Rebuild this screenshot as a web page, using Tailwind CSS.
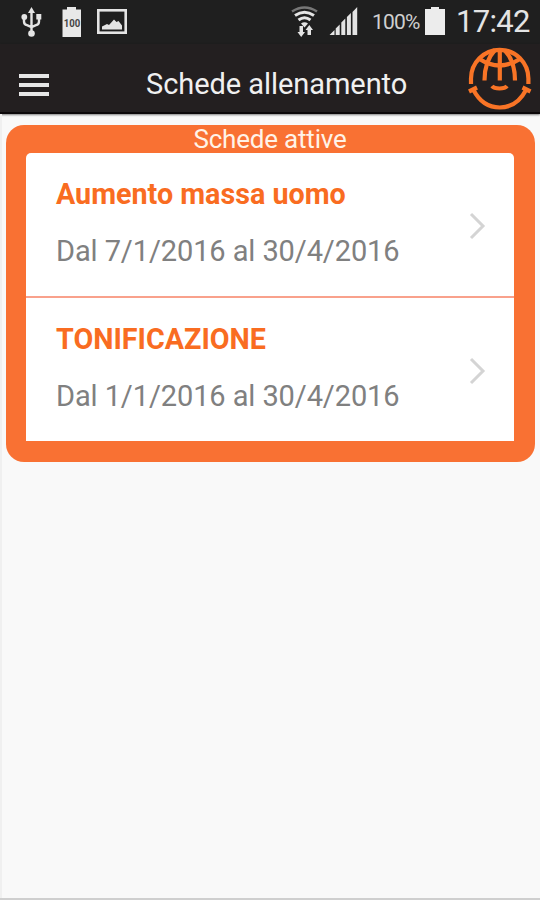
<!DOCTYPE html>
<html lang="it">
<head>
    <meta charset="UTF-8">
    <meta name="viewport" content="width=device-width, initial-scale=1.0">
    <title>Schede allenamento</title>
    <script src="https://cdn.jsdelivr.net/npm/@tailwindcss/browser@4"></script>
</head>
<body class="bg-[#f9f9f9] font-['Roboto',sans-serif]">
    <div class="flex h-[900px] w-[540px] flex-col overflow-hidden border-b-2 border-[#cfcfcf]">

        <!-- Status bar -->
        <div class="flex h-11 shrink-0 items-center bg-[#1f1f1f] text-[#e4e4e4]">
            <svg class="ml-5 h-11 w-[112px] shrink-0" viewBox="20 0 112 44" fill="none">
                <!-- USB -->
                <g stroke="#e4e4e4" stroke-width="2.400">
                    <path d="M31.500 12v20M24 18v3.500q0 3 3 3.700l4.500 2M39 18v3.500q0 3-3 3.700l-4.500 2"/>
                </g>
                <path d="M31.500 7l3.500 6h-7z" fill="#e4e4e4"/>
                <circle cx="31.500" cy="33.500" r="3.300" fill="#e4e4e4"/>
                <circle cx="24.300" cy="17" r="2.900" fill="#e4e4e4"/>
                <rect x="36.300" y="14" width="5" height="5.500" fill="#e4e4e4"/>
                <!-- Full battery -->
                <path d="M67 7h9v2.500h5V37H62.500V9.500H67z" fill="#e8e8e8"/>
                <text x="72" y="27" text-anchor="middle" textLength="16.500" lengthAdjust="spacingAndGlyphs" font-size="10" font-weight="700" fill="#444">100</text>
                <!-- Picture -->
                <rect x="98.300" y="10.300" width="27.400" height="22.400" stroke="#e4e4e4" stroke-width="2.600"/>
                <path d="M102 29.500v-3l5-2.500 2 1 5-5.500 2.500 2.500 2-1 3.500 4.500v4z" fill="#e4e4e4"/>
            </svg>
            <div class="flex-1"></div>
            <svg class="h-11 w-[72px] shrink-0" viewBox="290 0 72 44" fill="none">
                <!-- Wi-Fi with data arrows -->
                <path d="M292 11.500q12.500-8 25 0" stroke="#777" stroke-width="2.600"/>
                <path d="M295 15.500q9.500-6.500 19 0M298.500 20q6-4.500 12 0" stroke="#e4e4e4" stroke-width="3"/>
                <path d="M301 23.500q3.500-2.500 7 0l-3.500 4z" fill="#e4e4e4"/>
                <path d="M299.500 26h3.500v6h2l-3.800 5-3.700-5h2zM307.500 35h3.500v-5h2l-3.700-5-3.800 5h2z" fill="#e4e4e4"/>
                <!-- Signal -->
                <path d="M329.500 35l5-5v5zM335.700 28.500l4-4V35h-4zM341.300 22.500l4-4V35h-4zM346.900 17l4-4v22h-4zM352.500 12l4.700-5v28h-4.700z" fill="#e4e4e4"/>
            </svg>
            <span class="ml-[10px] w-[48px] whitespace-nowrap text-[21px] leading-none tracking-[-0.8px] text-[#cfcfcf]">100%</span>
            <svg class="ml-1 h-11 w-[22px] shrink-0" viewBox="424 0 22 44"><path d="M431 7h8v2h6v26h-20V9h6z" fill="#ececec"/></svg>
            <span class="ml-[10px] w-[84px] whitespace-nowrap pb-px text-[31px] leading-none tracking-[-0.7px]">17:42</span>
        </div>

        <!-- Title bar -->
        <header class="flex h-[70px] shrink-0 items-center border-b-2 border-[#0c0809] bg-[#231f20] pl-[18px] pr-[7px] shadow-[0_1px_2px_rgba(0,0,0,0.5)]">
            <div class="mt-[13px] flex w-8 flex-col gap-[5px] px-px">
                <span class="h-1 bg-[#e6e6e6]"></span>
                <span class="h-1 bg-[#e6e6e6]"></span>
                <span class="h-1 bg-[#e6e6e6]"></span>
            </div>
            <h1 class="ml-24 mt-[13px] whitespace-nowrap text-[29px] leading-none tracking-[-0.06px] text-[#f0f0f0]">Schede allenamento</h1>
            <svg class="ml-auto h-16 w-[66px]" viewBox="467 46 66 64" fill="none" stroke="#f97426" stroke-width="4.200">
                <path d="M471 84v-5.500a28.700 28.700 0 0 1 57.400 0V84"/>
                <path d="M479.500 59q20 13 40.500 0"/>
                <path d="M499.800 50v30.500M495 50q-10.500 11-10.500 30.500M504.500 50q10.500 11 10.500 30.500"/>
                <path d="M492 86q2 2.500 7.500 2.500t7.500-2.500"/>
                <path d="M473.500 90c6 11.500 15.500 17.500 26.200 17.500S520 101.500 526 90M469 91.500l8-4M530.500 91.500l-8-4"/>
            </svg>
        </header>

        <!-- Active plans -->
        <main class="flex-1 border-l-2 border-[#f0f0f0] pl-1 pr-[5px] pt-[11px]">
            <section class="h-[337px] rounded-[18px] bg-[#f97133] pb-5 pl-5 pr-[21px]">
                <h2 class="h-7 text-center text-[26px] leading-[29px] tracking-[-0.2px] text-[#fff3e8]">Schede attive</h2>
                <ul class="rounded-t-[5px] bg-white">
                    <li class="flex h-[145px] items-center justify-between border-b-2 border-[#f9a18c] pl-[30px] pr-7">
                        <div class="-mt-1 whitespace-nowrap">
                            <h3 class="text-[28.7px] font-bold leading-8 text-[#f96c21]">Aumento massa uomo</h3>
                            <p class="mt-[25px] text-[29px] leading-8 tracking-[-0.1px] text-[#808080]">Dal 7/1/2016 al 30/4/2016</p>
                        </div>
                        <svg class="mt-0.5 h-7 w-[17px]" viewBox="0 0 17 28" fill="none" stroke="#d4d4d4" stroke-width="3"><path d="M2 2l12 12L2 26"/></svg>
                    </li>
                    <li class="flex h-[143px] items-center justify-between pl-[30px] pr-7">
                        <div class="-mt-[5px] whitespace-nowrap">
                            <h3 class="text-[28.7px] font-bold leading-8 text-[#f96c21]">TONIFICAZIONE</h3>
                            <p class="mt-[25px] text-[29px] leading-8 tracking-[-0.1px] text-[#808080]">Dal 1/1/2016 al 30/4/2016</p>
                        </div>
                        <svg class="mt-[3px] h-7 w-[17px]" viewBox="0 0 17 28" fill="none" stroke="#d4d4d4" stroke-width="3"><path d="M2 2l12 12L2 26"/></svg>
                    </li>
                </ul>
            </section>
        </main>
    </div>
</body>
</html>
